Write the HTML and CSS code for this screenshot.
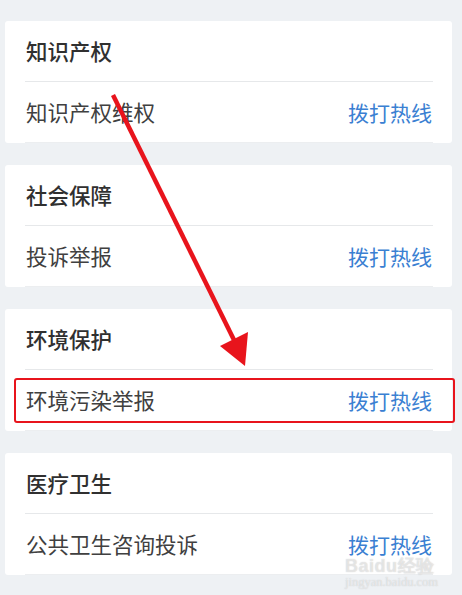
FILE: index.html
```html
<!DOCTYPE html>
<html lang="zh">
<head>
<meta charset="utf-8">
<link rel="stylesheet" href="styles.css">
</head>
<body>
<div class="page">
  <section class="card">
    <div class="card-title">知识产权</div>
    <div class="row"><span class="row-name">知识产权维权</span><span class="row-link">拨打热线</span></div>
  </section>
  <section class="card">
    <div class="card-title">社会保障</div>
    <div class="row"><span class="row-name">投诉举报</span><span class="row-link">拨打热线</span></div>
  </section>
  <section class="card">
    <div class="card-title">环境保护</div>
    <div class="row"><span class="row-name">环境污染举报</span><span class="row-link">拨打热线</span><span class="highlight"></span></div>
  </section>
  <section class="card">
    <div class="card-title">医疗卫生</div>
    <div class="row"><span class="row-name">公共卫生咨询投诉</span><span class="row-link">拨打热线</span></div>
  </section>

  <svg class="arrow" width="462" height="595" viewBox="0 0 462 595">
    <line x1="113" y1="95" x2="236" y2="344" stroke="#e8141c" stroke-width="4.5"/>
    <polygon points="220,346 248,332 245,366" fill="#e8141c"/>
  </svg>

  <div class="watermark">
    <div class="wm-logo">Baidu经验</div>
    <div class="wm-url">jingyan.baidu.com</div>
  </div>
</div>
</body>
</html>
```
FILE: styles.css
```css
html, body {
  margin: 0;
  padding: 0;
}
body {
  background: #eef1f4;
  font-family: "Noto Sans CJK SC", "Noto Sans", sans-serif;
  width: 462px;
  height: 595px;
  overflow: hidden;
}
.page {
  position: relative;
  padding: 21px 10px 0 5px;
  display: flex;
  flex-direction: column;
  gap: 22px;
  height: 595px;
  box-sizing: border-box;
}
.card {
  background: #ffffff;
  border-radius: 3px;
  height: 122px;
  display: flex;
  flex-direction: column;
  flex-shrink: 0;
}
.card-title {
  height: 60px;
  margin: 0 19px 0 20px;
  border-bottom: 1px solid #e6e8ea;
  display: flex;
  align-items: center;
  padding-left: 1px;
  font-size: 21.5px;
  font-weight: 500;
  color: #303030;
}
.row {
  position: relative;
  height: 61px;
  margin: 0 19px 0 20px;
  border-bottom: 1px solid #eceef0;
  display: flex;
  align-items: center;
  justify-content: space-between;
  padding-left: 1px;
  font-size: 21.5px;
}
.row-name {
  color: #404040;
}
.row-link {
  color: #3a80d2;
  font-size: 21px;
  margin-right: 1px;
}
.highlight {
  position: absolute;
  left: -11px;
  top: 8px;
  width: 441px;
  height: 45px;
  box-sizing: border-box;
  border: 2px solid #e8141c;
  border-radius: 3px;
}
.arrow {
  position: absolute;
  left: 0;
  top: 0;
  pointer-events: none;
}
.watermark {
  position: absolute;
  left: 345px;
  top: 558px;
  font-family: "Liberation Sans", sans-serif;
  color: rgba(255, 255, 255, 0.5);
  text-shadow: 0 0 1px rgba(160, 160, 160, 0.6);
}
.wm-logo {
  font-size: 18px;
  font-weight: 700;
  line-height: 17px;
  letter-spacing: 0.5px;
}
.wm-url {
  font-family: "Liberation Serif", serif;
  font-size: 12.5px;
  line-height: 15px;
}
```
